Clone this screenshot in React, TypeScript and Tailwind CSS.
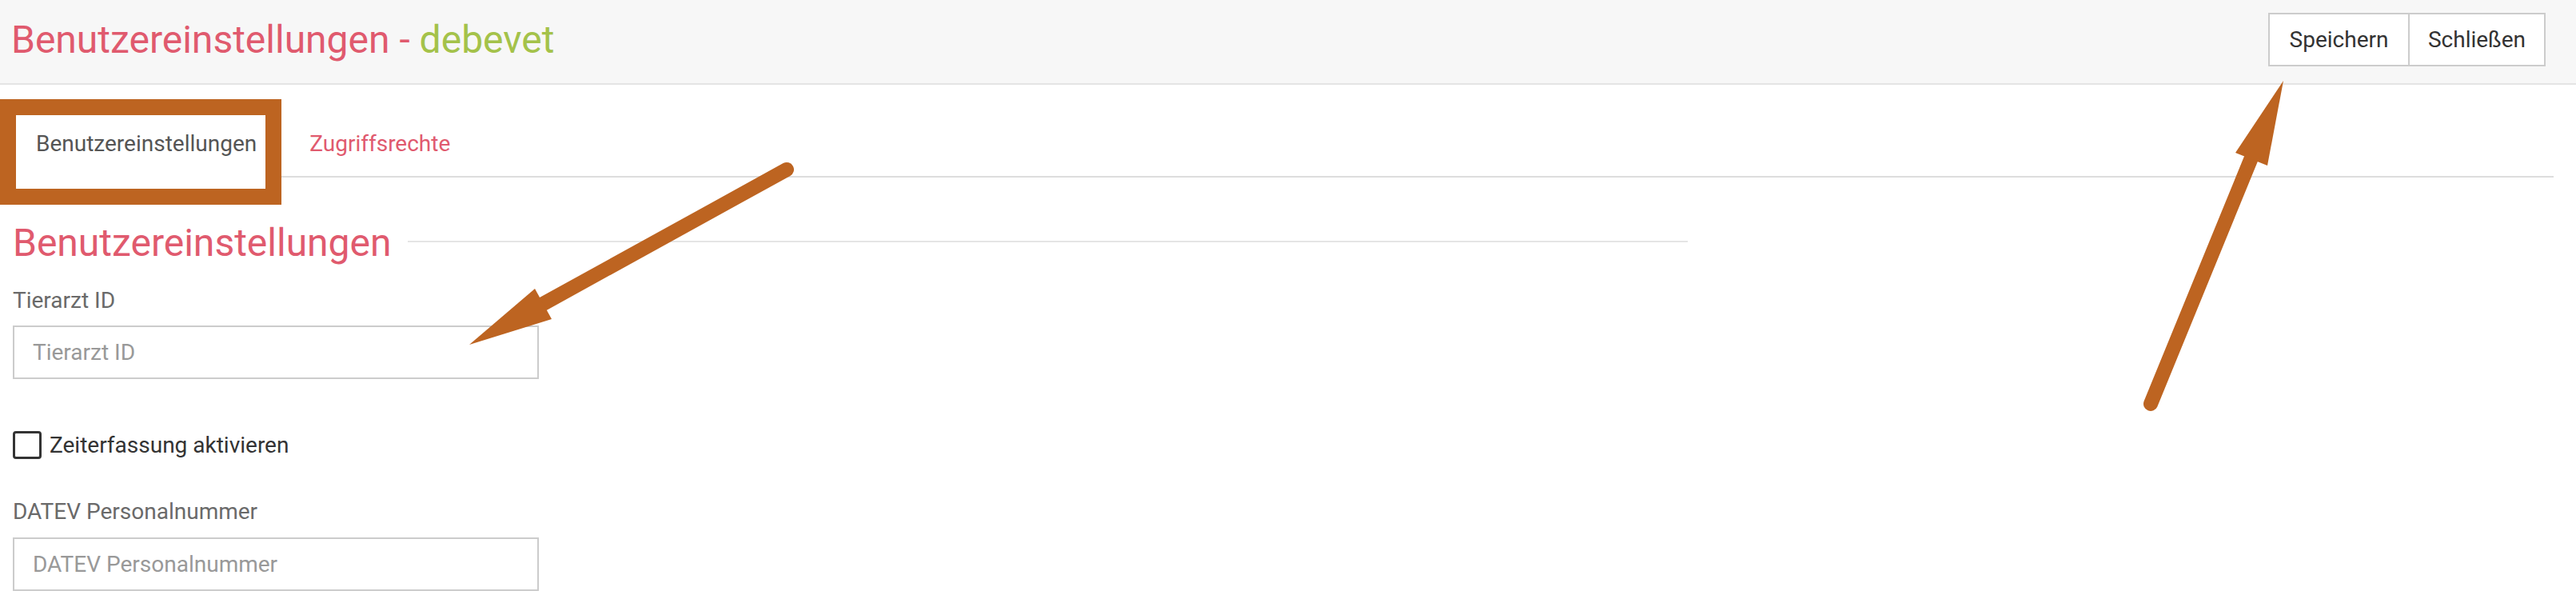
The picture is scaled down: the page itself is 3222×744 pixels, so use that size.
export default function App() {
  return (
    <div className="relative w-[3222px] h-[744px] overflow-hidden bg-white font-[Roboto,sans-serif]">
      <header className="flex items-center justify-between h-[106px] pt-[16px] pb-[21px] pl-[14px] pr-[38px] bg-[#f7f7f7] border-b-2 border-[#e4e4e4]">
        <h1 className="text-[48px] leading-none text-[#e05a6e]">
          Benutzereinstellungen - <span className="text-[#a4c24a]">debevet</span>
        </h1>
        <div className="flex h-[67px] border-2 border-[#ccc] bg-white text-[28px] leading-none text-[#333]">
          <button className="w-[175px] border-r-2 border-[#ccc]">Speichern</button>
          <button className="w-[168px]">Schließen</button>
        </div>
      </header>

      <main className="pl-[16px] pr-[16px]">
        <nav className="mt-[32px] mr-[12px] flex border-b-2 border-[#ddd]">
          <div className="-mb-[2px] h-[84px] flex items-center px-[27px] border-2 border-[#ddd] border-b-white bg-white text-[28px] leading-none text-[#555]">
            Benutzereinstellungen
          </div>
          <div className="ml-[8px] -mb-[2px] h-[84px] flex items-center px-[27px] border-2 border-transparent text-[28px] leading-none text-[#e05a6e]">
            Zugriffsrechte
          </div>
        </nav>

        <div className="mt-[58px] flex items-start w-[2095px]">
          <h2 className="text-[48px] leading-none text-[#e05a6e]">Benutzereinstellungen</h2>
          <div className="flex-1 ml-[20px] mt-[21px] h-[2px] bg-[#e5e5e5]" />
        </div>

        <label className="block mt-[34px] text-[28px] leading-none text-[#6a6a6a]">Tierarzt ID</label>
        <input
          className="mt-[17px] block w-[658px] h-[67px] border-2 border-[#ccc] pl-[23px] text-[28px] text-[#333] placeholder:text-[#999] outline-none"
          placeholder="Tierarzt ID"
        />

        <div className="mt-[65px] flex items-center gap-[10px]">
          <span className="block w-[36px] h-[35px] border-[3px] border-[#333] rounded-[4px] bg-white" />
          <span className="text-[28px] leading-none text-[#333]">Zeiterfassung aktivieren</span>
        </div>

        <label className="block mt-[52px] text-[28px] leading-none text-[#6a6a6a]">DATEV Personalnummer</label>
        <input
          className="mt-[18px] block w-[658px] h-[67px] border-2 border-[#ccc] pl-[23px] text-[28px] text-[#333] placeholder:text-[#999] outline-none"
          placeholder="DATEV Personalnummer"
        />
      </main>

      <svg
        className="absolute inset-0 pointer-events-none"
        width="3222"
        height="744"
        viewBox="0 0 3222 744"
      >
        <rect x="10" y="134" width="332" height="112" fill="none" stroke="#bd6421" strokeWidth="20" />
        <line x1="984" y1="212" x2="672" y2="384" stroke="#bd6421" strokeWidth="18" strokeLinecap="round" />
        <polygon points="587,431 690,399 669,361" fill="#bd6421" />
        <line x1="2690" y1="505" x2="2819" y2="190" stroke="#bd6421" strokeWidth="18" strokeLinecap="round" />
        <polygon points="2856,101 2836,207 2796,191" fill="#bd6421" />
      </svg>
    </div>
  );
}
